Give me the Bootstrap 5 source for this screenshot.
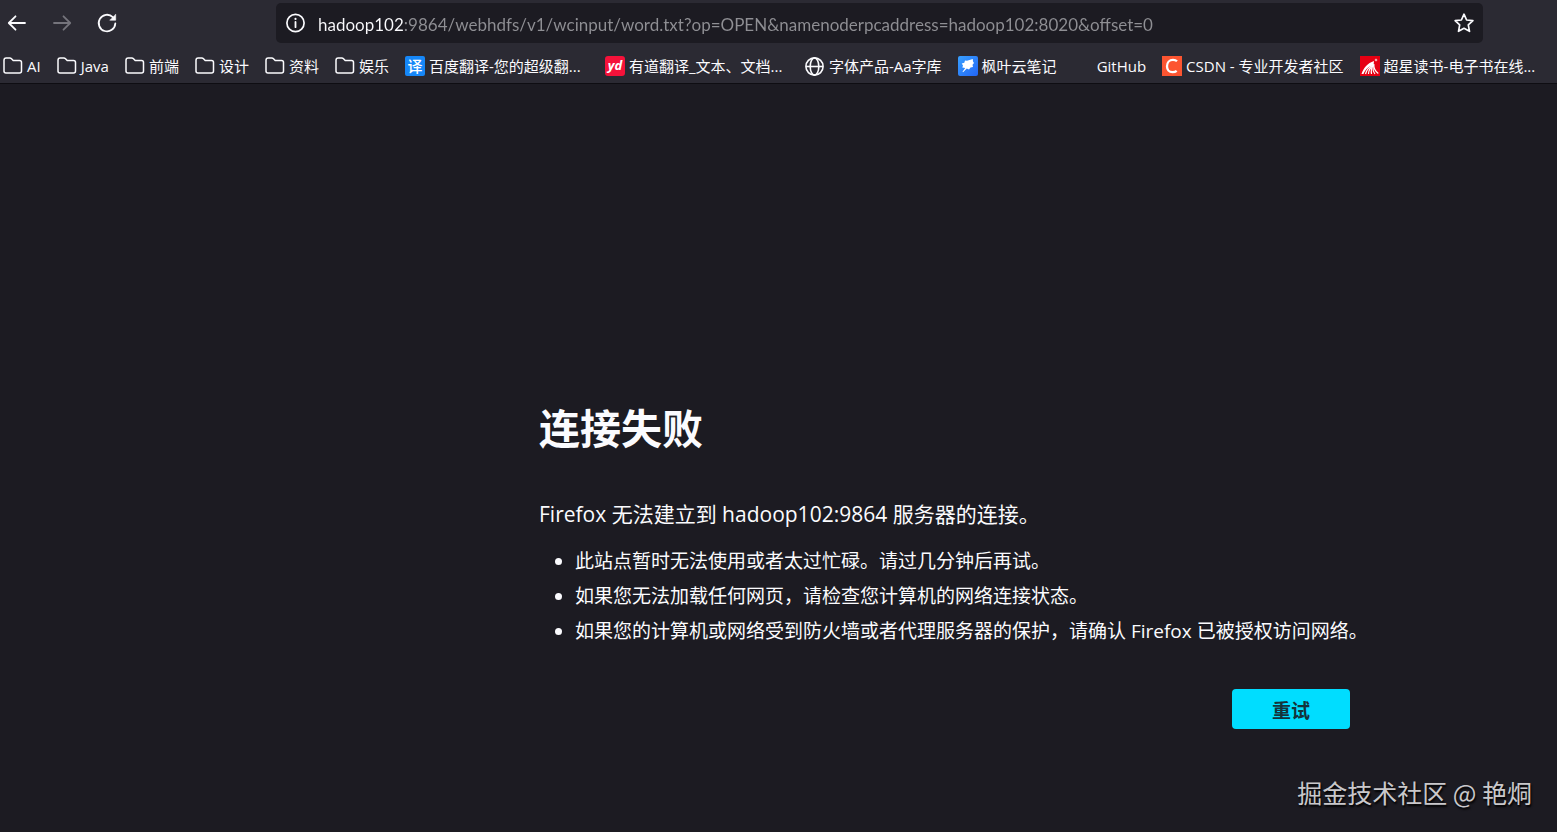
<!DOCTYPE html>
<html lang="zh-CN">
<head>
<meta charset="utf-8">
<meta name="viewport" content="width=device-width, initial-scale=1">
<title>连接失败</title>
<link href="https://cdn.jsdelivr.net/npm/bootstrap@5.3.0/dist/css/bootstrap.min.css" rel="stylesheet">
<style>
  :root { --chrome: #2b2a33; --page: #1c1b22; --ink: #fbfbfe; --dim: #8f8f94; }
  body { background: var(--page); color: var(--ink); font-family: "Open Sans", "Noto Sans CJK SC", sans-serif; }
  .browser-bar { background: var(--chrome); border-bottom: 1px solid #0e0d12; }
  .tool-row { padding: 3px 74px 0 5px; }
  .nav-buttons { width: 271px; gap: 21px; }
  .icon-btn { width: 24px; height: 24px; padding: 0; border: 0; background: none; color: var(--ink); line-height: 1; }
  .icon-btn:disabled { color: #75747c; }
  .icon-btn svg, .mark-icon { display: block; }
  .address { background: var(--page); border-radius: 5px; height: 40px; padding: 0 8px; gap: 10px; }
  .address input {
    border: 0; padding: 3px 0 0; outline: 0; font: 17px/24px Lato, "Noto Sans CJK SC", sans-serif;
    color: transparent; -webkit-background-clip: text; background-clip: text;
    background-image: linear-gradient(90deg, var(--ink) 86px, var(--dim) 86px);
  }
  .bookmarks { gap: 16px; padding: 11px 3px 5px; font-size: 15px; line-height: 24px; }
  .bookmarks a { gap: 4px; color: var(--ink); }
  .mark-icon { width: 20px; height: 20px; flex: none; }
  .mark-label { max-width: 160px; white-space: nowrap; }
  .mark-label.long { width: 160px; }
  .error-page { max-width: 1143px; padding: 316px 0 0 332px; }
  .error-page h1 { font-size: 41px; line-height: 56px; margin-bottom: 42px; }
  .error-page .summary { font-size: 21px; line-height: 32px; margin-bottom: 14px; }
  .error-page ul { font-size: 19px; line-height: 35px; padding-left: 36px; margin-bottom: 40px; }
  .retry { width: 118px; height: 40px; background: #00ddff; color: #15333b; font-size: 19px; line-height: 24px; border: 0; border-radius: 4px; padding: 4px 0 0; }
  .retry:hover { background: #80ebff; color: #15333b; }
  .watermark { right: 25px; bottom: 21px; font: 25px/38px "Noto Sans CJK SC", sans-serif; color: #c9c8cb; text-shadow: 1px 2px 2px #000; }
</style>
</head>
<body class="position-relative min-vh-100">
<svg class="d-none" aria-hidden="true">
  <symbol id="folder" viewBox="0 0 20 20"><path d="M1 15.500V4.200Q1 2 3.200 2H6.800Q7.800 2 8.500 2.700L10.200 4.500H16.500Q18.500 4.500 18.500 6.500V15Q18.500 17 16.500 17H3Q1 17 1 15Z" fill="none" stroke="currentColor" stroke-width="1.500" stroke-linejoin="round"/></symbol>
</svg>

<header class="browser-bar overflow-hidden">
  <div class="tool-row d-flex align-items-center">
    <div class="nav-buttons d-flex flex-shrink-0">
      <button class="icon-btn" type="button" aria-label="后退"><svg width="24" height="24" viewBox="0 0 24 24" fill="none" stroke="currentColor" stroke-width="1.800" stroke-linecap="round" stroke-linejoin="round"><path d="M4 12H20M10.500 5.300 3.800 12l6.700 6.700"/></svg></button>
      <button class="icon-btn" type="button" aria-label="前进" disabled><svg width="24" height="24" viewBox="0 0 24 24" fill="none" stroke="currentColor" stroke-width="1.800" stroke-linecap="round" stroke-linejoin="round"><path d="M4 12H20M13.500 5.300 20.200 12l-6.700 6.700"/></svg></button>
      <button class="icon-btn" type="button" aria-label="刷新"><svg width="24" height="24" viewBox="0 0 24 24" fill="none" stroke="currentColor" stroke-width="1.800" stroke-linecap="round"><path d="M20.300 12.500A8.300 8.300 0 1 1 17.800 6.100"/><path d="M20.700 3.600V9.200H15.100Z" fill="currentColor" stroke-width=".6" stroke-linejoin="round"/></svg></button>
    </div>
    <div class="address d-flex align-items-center flex-grow-1">
      <button class="icon-btn flex-shrink-0" type="button" aria-label="网站信息"><svg width="24" height="24" viewBox="0 0 24 24" fill="none" stroke="currentColor"><circle cx="11.500" cy="12" r="8.600" stroke-width="1.700"/><path d="M11.500 11v5.200" stroke-width="1.800" stroke-linecap="round"/><circle cx="11.500" cy="7.900" r="1.100" fill="currentColor" stroke="none"/></svg></button>
      <input class="flex-grow-1" type="text" aria-label="地址栏" spellcheck="false" value="hadoop102:9864/webhdfs/v1/wcinput/word.txt?op=OPEN&amp;namenoderpcaddress=hadoop102:8020&amp;offset=0">
      <button class="icon-btn flex-shrink-0" type="button" aria-label="添加书签"><svg width="24" height="24" viewBox="0 0 24 24" fill="none" stroke="currentColor" stroke-width="1.700" stroke-linejoin="round"><path d="M13 3.200 15.600 9 21.900 9.700 17.300 13.900 18.500 20.300 13 17.300 7.500 20.300 8.700 13.900 4.100 9.700 10.400 9Z"/></svg></button>
    </div>
  </div>
  <nav aria-label="书签">
    <ul class="bookmarks list-unstyled d-flex mb-0">
      <li><a class="d-flex align-items-center text-decoration-none" href="#"><svg class="mark-icon"><use href="#folder"/></svg><span class="mark-label">AI</span></a></li>
      <li><a class="d-flex align-items-center text-decoration-none" href="#"><svg class="mark-icon"><use href="#folder"/></svg><span class="mark-label">Java</span></a></li>
      <li><a class="d-flex align-items-center text-decoration-none" href="#"><svg class="mark-icon"><use href="#folder"/></svg><span class="mark-label">前端</span></a></li>
      <li><a class="d-flex align-items-center text-decoration-none" href="#"><svg class="mark-icon"><use href="#folder"/></svg><span class="mark-label">设计</span></a></li>
      <li><a class="d-flex align-items-center text-decoration-none" href="#"><svg class="mark-icon"><use href="#folder"/></svg><span class="mark-label">资料</span></a></li>
      <li><a class="d-flex align-items-center text-decoration-none" href="#"><svg class="mark-icon"><use href="#folder"/></svg><span class="mark-label">娱乐</span></a></li>
      <li><a class="d-flex align-items-center text-decoration-none" href="#"><svg class="mark-icon" viewBox="0 0 20 20"><rect width="20" height="20" rx="2" fill="#1687f8"/><text x="10" y="15.500" text-anchor="middle" font-family="Noto Sans CJK SC" font-size="15" font-weight="500" fill="#fff">译</text></svg><span class="mark-label long">百度翻译-您的超级翻...</span></a></li>
      <li><a class="d-flex align-items-center text-decoration-none" href="#"><svg class="mark-icon" viewBox="0 0 20 20"><rect width="20" height="20" rx="3" fill="#f5123a"/><text x="10" y="14" text-anchor="middle" font-family="Open Sans" font-style="italic" font-weight="700" font-size="13" fill="#fff">yd</text></svg><span class="mark-label long">有道翻译_文本、文档...</span></a></li>
      <li><a class="d-flex align-items-center text-decoration-none" href="#"><svg class="mark-icon" viewBox="0 0 20 20" fill="none" stroke="currentColor" stroke-width="1.600"><circle cx="9.500" cy="10.500" r="8.600"/><ellipse cx="9.500" cy="10.500" rx="4.300" ry="8.600"/><path d="M1 10.500H18"/></svg><span class="mark-label">字体产品-Aa字库</span></a></li>
      <li><a class="d-flex align-items-center text-decoration-none" href="#"><svg class="mark-icon" viewBox="0 0 20 20"><defs><linearGradient id="leafbg" x2="1" y2="1"><stop stop-color="#38a0ff"/><stop offset="1" stop-color="#2265f5"/></linearGradient></defs><rect width="20" height="20" rx="2" fill="url(#leafbg)"/><path d="M7 4.500 9 4.800 14.800 3 15 5.500 16 7 14.500 8.800 15 11 12.500 11.500 11 13.500 8.800 12.600 5 16.200 4.500 15.700 7.200 12 4.300 11.500 5 9.500 3.700 7.500 6.300 6.800Z" fill="#fff"/></svg><span class="mark-label">枫叶云笔记</span></a></li>
      <li><a class="d-flex align-items-center text-decoration-none" href="#"><span class="mark-icon"></span><span class="mark-label">GitHub</span></a></li>
      <li><a class="d-flex align-items-center text-decoration-none" href="#"><svg class="mark-icon" viewBox="0 0 20 20"><path fill="#fc5531" d="M0 0h20v20H0z"/><path d="M15 5.300Q13.600 3.900 11 3.900C7.300 3.900 5 6.700 5 10.200S7.100 16.200 10.500 16.200Q13.100 16.200 14.700 14.900" fill="none" stroke="#fff" stroke-width="2.300"/></svg><span class="mark-label">CSDN - 专业开发者社区</span></a></li>
      <li><a class="d-flex align-items-center text-decoration-none" href="#"><svg class="mark-icon" viewBox="0 0 20 20"><path fill="#e60012" d="M0 0h20v20H0z"/><path d="M1.500 18C3.500 12 7.500 7 14 5L13.500 9.500C9 10 5.500 13 3.500 18Z" fill="#fff"/><g fill="none" stroke="#fff" stroke-width="1.200"><path d="M5.500 18Q7 12 12.500 9.500"/><path d="M8.500 18Q8.500 13 13 9.500"/><path d="M11.500 18Q10.500 13 13.300 9"/><path d="M15 18Q12 14 13.500 8.500"/><path d="M18.300 17.500Q13.500 14 13.800 8"/></g><path d="M16 2.300 16.500 3.500 17.700 4 16.500 4.500 16 5.700 15.500 4.500 14.300 4 15.500 3.500Z" fill="#fff"/></svg><span class="mark-label">超星读书-电子书在线...</span></a></li>
    </ul>
  </nav>
</header>

<main class="error-page mx-auto">
  <h1 class="fw-bold">连接失败</h1>
  <p class="summary text-nowrap">Firefox 无法建立到 hadoop102:9864 服务器的连接。</p>
  <ul class="text-nowrap">
    <li>此站点暂时无法使用或者太过忙碌。请过几分钟后再试。</li>
    <li>如果您无法加载任何网页，请检查您计算机的网络连接状态。</li>
    <li>如果您的计算机或网络受到防火墙或者代理服务器的保护，请确认 Firefox 已被授权访问网络。</li>
  </ul>
  <div class="d-flex justify-content-end">
    <button class="retry btn fw-bold" type="button">重试</button>
  </div>
</main>
<div class="watermark position-absolute text-nowrap">掘金技术社区 @ 艳烔</div>
<script src="https://cdn.jsdelivr.net/npm/bootstrap@5.3.0/dist/js/bootstrap.bundle.min.js"></script>
</body>
</html>
